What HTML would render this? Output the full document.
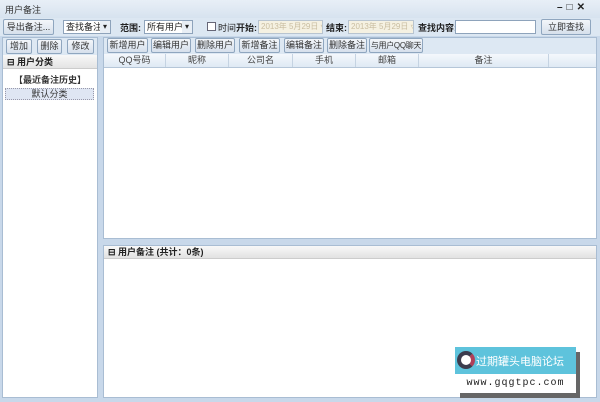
<!DOCTYPE html>
<html><head><meta charset="utf-8"><style>
*{box-sizing:border-box;margin:0;padding:0}
body{width:600px;height:402px;overflow:hidden;background:#c8d8ea;font-family:"Liberation Sans","Noto Sans CJK SC",sans-serif;font-size:9px;color:#222;position:relative}
.a{position:absolute;white-space:nowrap}
.btn{position:absolute;white-space:nowrap;overflow:hidden;height:15px;border:1px solid #8fa6bf;border-radius:2px;background:linear-gradient(#f3f6fa,#d6e0ec);text-align:center;line-height:13px;font-size:9px;color:#333}
.sel{position:absolute;white-space:nowrap;height:14px;border:1px solid #8ea3bb;background:#fff;line-height:12px;padding-left:2px;font-size:9px}
.sel:after{content:"▾";position:absolute;right:0;top:0;width:10px;height:12px;background:#e8eef5;text-align:center;font-size:8px}
.date{position:absolute;white-space:nowrap;overflow:hidden;height:14px;border:1px solid #b8c4d0;background:#f5f1e2;color:#c9bda0;line-height:12px;padding-left:2px;font-size:8px}
.th{position:absolute;top:54px;height:13px;border-right:1px solid #c5d3e2;background:linear-gradient(#f4f8fc,#dfe9f4);text-align:center;line-height:13px;font-size:9px;color:#444}
</style></head><body>
<div class="a" style="left:0;top:0;width:600px;height:18px;background:linear-gradient(#e8eff7,#d7e3ef)"></div>
<div class="a" style="left:5px;top:3px;font-size:9px;color:#333">用户备注</div>
<div class="a" style="left:557px;top:2px;font-size:10px;font-weight:bold;color:#222;letter-spacing:4px">–□✕</div>
<div class="a" style="left:0;top:18px;width:600px;height:18px;background:#dce7f2"></div>
<div class="btn" style="left:3px;top:19px;width:51px;height:16px;line-height:14px">导出备注...</div>
<div class="sel" style="left:63px;top:20px;width:48px">查找备注</div>
<div class="a" style="left:120px;top:21px;font-weight:bold">范围:</div>
<div class="sel" style="left:144px;top:20px;width:49px">所有用户</div>
<div class="a" style="left:207px;top:22px;width:9px;height:9px;border:1px solid #667;background:#fff"></div>
<div class="a" style="left:218px;top:21px">时间</div>
<div class="a" style="left:236px;top:21px;font-weight:bold">开始:</div>
<div class="date" style="left:258px;top:20px;width:65px">2013年 5月29日 ▿</div>
<div class="a" style="left:326px;top:21px;font-weight:bold">结束:</div>
<div class="date" style="left:348px;top:20px;width:66px">2013年 5月29日 ▿</div>
<div class="a" style="left:418px;top:21px;font-weight:bold">查找内容:</div>
<div class="a" style="left:455px;top:20px;width:81px;height:14px;border:1px solid #8ea3bb;background:#fff"></div>
<div class="btn" style="left:541px;top:19px;width:50px;height:16px;line-height:14px">立即查找</div>

<div class="a" style="left:2px;top:37px;width:96px;height:361px;background:#fff;border:1px solid #a9bdd3"></div>
<div class="a" style="left:3px;top:38px;width:94px;height:17px;background:#dde8f3"></div>
<div class="btn" style="left:6px;top:39px;width:26px">增加</div>
<div class="btn" style="left:37px;top:39px;width:25px">删除</div>
<div class="btn" style="left:67px;top:39px;width:27px">修改</div>
<div class="a" style="left:3px;top:55px;width:94px;height:14px;background:linear-gradient(#f8f8f8,#e4e4e4);border-bottom:1px solid #ccc;font-weight:bold;line-height:14px;padding-left:4px">⊟ 用户分类</div>
<div class="a" style="left:3px;top:73px;width:94px;text-align:center;font-weight:bold;color:#333">【最近备注历史】</div>
<div class="a" style="left:5px;top:88px;width:89px;height:12px;background:#dfe6f3;border:1px dotted #99a;text-align:center;line-height:10px;color:#333">默认分类</div>

<div class="a" style="left:103px;top:37px;width:494px;height:202px;background:#fff;border:1px solid #a9bdd3"></div>
<div class="a" style="left:104px;top:38px;width:492px;height:16px;background:#dde8f3"></div>
<div class="btn" style="left:107px;top:38px;width:41px">新增用户</div>
<div class="btn" style="left:151px;top:38px;width:40px">编辑用户</div>
<div class="btn" style="left:195px;top:38px;width:40px">删除用户</div>
<div class="btn" style="left:239px;top:38px;width:41px">新增备注</div>
<div class="btn" style="left:284px;top:38px;width:40px">编辑备注</div>
<div class="btn" style="left:327px;top:38px;width:40px">删除备注</div>
<div class="btn" style="left:369px;top:38px;width:54px;font-size:8px;letter-spacing:-0.3px">与用户QQ聊天</div>
<div class="th" style="left:104px;width:62px">QQ号码</div>
<div class="th" style="left:166px;width:63px">昵称</div>
<div class="th" style="left:229px;width:64px">公司名</div>
<div class="th" style="left:293px;width:63px">手机</div>
<div class="th" style="left:356px;width:63px">邮箱</div>
<div class="th" style="left:419px;width:130px">备注</div>
<div class="th" style="left:549px;width:47px;border-right:none"></div>
<div class="a" style="left:104px;top:67px;width:492px;height:1px;background:#b5c6d8"></div>

<div class="a" style="left:103px;top:245px;width:494px;height:153px;background:#fff;border:1px solid #a9bdd3"></div>
<div class="a" style="left:104px;top:246px;width:492px;height:13px;background:linear-gradient(#f8f8f8,#e2e2e2);border-bottom:1px solid #ccc;font-weight:bold;line-height:13px;padding-left:4px">⊟ 用户备注 (共计：0条)</div>

<div class="a" style="left:460px;top:352px;width:120px;height:46px;background:#666"></div>
<div class="a" style="left:455px;top:347px;width:121px;height:27px;background:#5ec3dc"></div>
<div class="a" style="left:457px;top:351px;width:18px;height:18px;border-radius:50%;border:4px solid #3c3c4e;border-right-color:#b0405a;background:#fff"></div>
<div class="a" style="left:476px;top:353px;color:#fff;font-size:11px">过期罐头电脑论坛</div>
<div class="a" style="left:455px;top:374px;width:121px;height:19px;background:#fff;font-family:'Liberation Mono',monospace;font-size:10px;line-height:19px;text-align:center;letter-spacing:1px">www.gqgtpc.com</div>
</body></html>
